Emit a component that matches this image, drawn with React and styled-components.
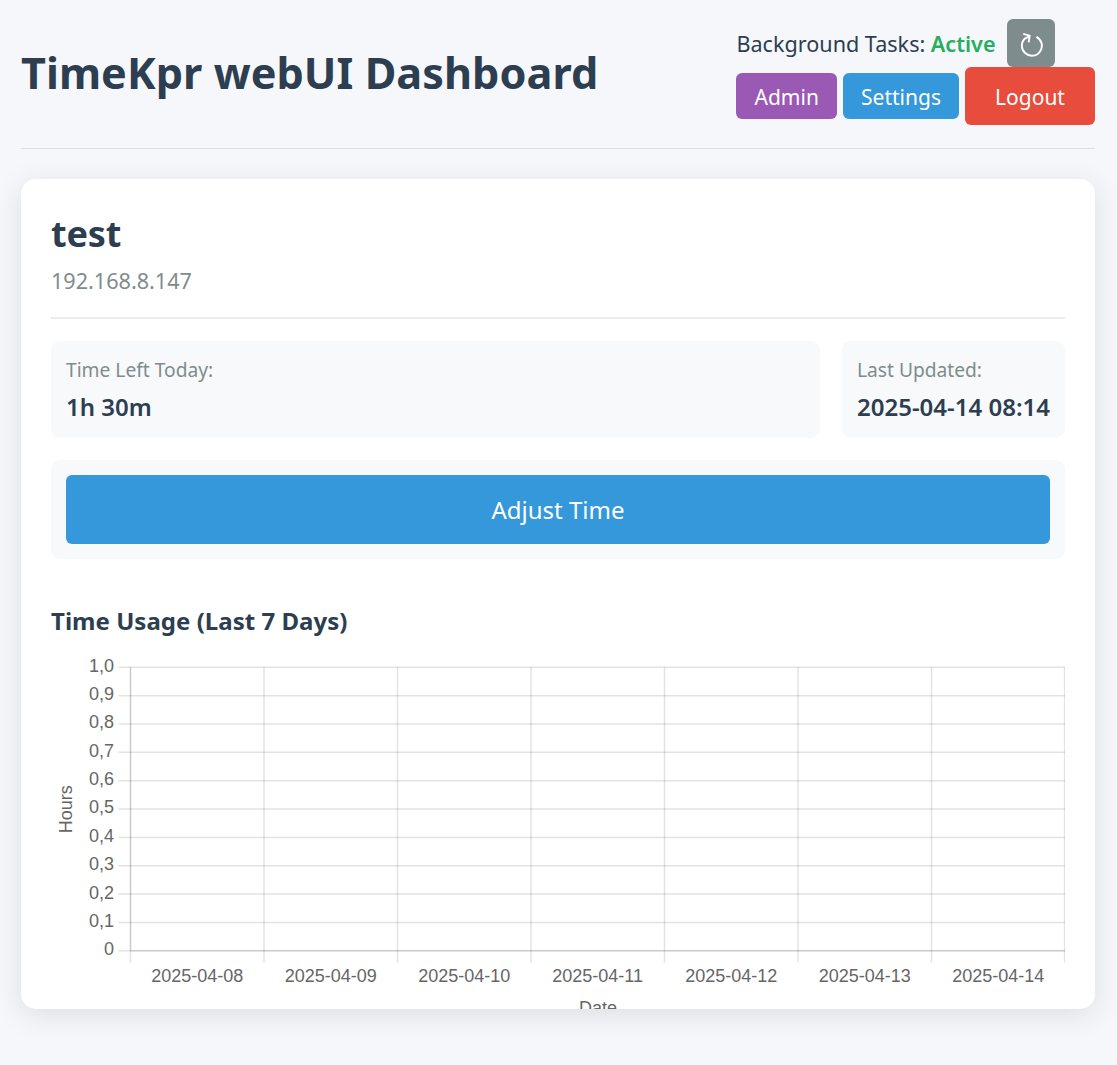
import React from "react";
import styled, { createGlobalStyle } from "styled-components";

const GlobalStyle = createGlobalStyle`
  * { box-sizing: border-box; }
  html, body { margin: 0; padding: 0; }
  body {
    background: #f5f7fb;
    color: #2c3e50;
    font-family: "Noto Sans", "Open Sans", sans-serif;
    min-height: 1065px;
    overflow: hidden;
  }
`;

const Page = styled.main`
  width: 1117px;
  padding: 0 22px 0 21px;
`;

const Header = styled.header`
  display: flex;
  justify-content: space-between;
  height: 149px;
  border-bottom: 1px solid #dcdfe4;
`;

const Title = styled.h1`
  margin: 43px 0 0;
  font-size: 43.2px;
  font-weight: 700;
  line-height: 60px;
  letter-spacing: 0.05px;
  white-space: nowrap;
`;

const Controls = styled.div`
  width: 358.6px;
  padding-top: 19px;
`;

const StatusRow = styled.div`
  display: flex;
  align-items: center;
  height: 48px;
  font-size: 21.6px;
  white-space: nowrap;
`;

const Active = styled.span`
  margin-left: 5.6px;
  color: #27ae60;
  font-weight: 600;
`;

const RefreshButton = styled.button`
  display: grid;
  place-items: center;
  width: 48px;
  height: 48px;
  margin-left: 11.6px;
  padding: 0;
  border: 0;
  border-radius: 6px;
  background: #7f8c8d;
`;

const ButtonRow = styled.nav`
  display: flex;
  align-items: center;
  justify-content: space-between;
  height: 58px;
`;

const NavButton = styled.button`
  width: ${(p) => p.$width}px;
  height: ${(p) => p.$height}px;
  padding: 1px 0 0;
  border: 0;
  border-radius: 6px;
  background: ${(p) => p.$color};
  color: #fff;
  font-family: inherit;
  font-size: 21px;
`;

const Card = styled.section`
  height: 830px;
  margin-top: 30px;
  padding: 30px 30px 0;
  overflow: hidden;
  border-radius: 15px;
  background: #fff;
  box-shadow: 0 6px 30px rgba(0, 0, 0, 0.1);
`;

const UserHeader = styled.div`
  height: 110px;
  border-bottom: 2px solid #ececee;
`;

const UserName = styled.h2`
  margin: 0;
  font-size: 36px;
  font-weight: 700;
  line-height: 50px;
  letter-spacing: -0.15px;
`;

const Address = styled.div`
  margin-top: 7px;
  color: #7f8c8d;
  font-size: 21.6px;
  line-height: 30px;
`;

const Stats = styled.div`
  display: grid;
  grid-template-columns: 1fr 223px;
  gap: 22px;
  margin-top: 22px;
`;

const Panel = styled.div`
  height: ${(p) => p.$height}px;
  padding: 15px;
  border-radius: 9px;
  background: #f8f9fb;
  white-space: nowrap;
`;

const Label = styled.div`
  color: #7f8c8d;
  font-size: 19.2px;
  line-height: 28px;
`;

const Value = styled.div`
  margin-top: 6px;
  font-size: 24px;
  font-weight: 600;
  line-height: 34px;
`;

const Actions = styled.div`
  margin-top: 22px;
`;

const AdjustButton = styled.button`
  display: block;
  width: 100%;
  height: 69px;
  padding: 0;
  border: 0;
  border-radius: 6px;
  background: #3498db;
  color: #fff;
  font-family: inherit;
  font-size: 24px;
`;

const ChartTitle = styled.h3`
  margin: 45px 0 0;
  font-size: 24px;
  font-weight: 700;
  line-height: 34px;
  letter-spacing: 0.03px;
`;

const Chart = styled.svg`
  display: block;
  width: 1014px;
  height: 380px;
  margin-top: 15px;
  fill: #666;
  font-family: "Liberation Sans", Arial, sans-serif;
  font-size: 18px;
`;

const RefreshIcon = () => (
  <svg width="28" height="28" viewBox="0 0 28 28" fill="none" stroke="#fff" strokeWidth="1.9">
    <path d="M8.5 9A10 10 0 1 0 19.4 7.8" />
    <path d="M6.2 4.9L12.6 6.7L11.7 13.4M12.6 6.7L8 9.8" />
  </svg>
);

const hours = ["1,0", "0,9", "0,8", "0,7", "0,6", "0,5", "0,4", "0,3", "0,2", "0,1", "0"];
const days = ["08", "09", "10", "11", "12", "13", "14"];
const left = 79.5;
const top = 14.3;
const rowY = (i) => i * 28.35 + top;
const colX = (i) => Math.min(1013.6, i * 133.5 + left);

const UsageChart = () => (
  <Chart viewBox="0 0 1014 380">
    {hours.map((h, i) => (
      <g key={h}>
        <path d={`M67.5 ${rowY(i)}H1014`} stroke="rgba(0,0,0,.11)" strokeWidth="1.5" />
        <text x="63" y={rowY(i) + 4.4} textAnchor="end">{h}</text>
      </g>
    ))}
    {Array.from({ length: 8 }, (_, i) => (
      <path key={i} d={`M${colX(i)} ${top}V309.5`} stroke="rgba(0,0,0,.11)" strokeWidth="1.5" />
    ))}
    <path d={`M${left} ${top}V${rowY(10)}H1014`} fill="none" stroke="rgba(0,0,0,.1)" strokeWidth="1.5" />
    {days.map((d, i) => (
      <text key={d} x={146.2 + i * 133.5} y="329" textAnchor="middle">{`2025-04-${d}`}</text>
    ))}
    <text transform="translate(21 156.3) rotate(-90)" textAnchor="middle">Hours</text>
    <text x="547" y="361" textAnchor="middle">Date</text>
  </Chart>
);

export default function App() {
  return (
    <>
      <GlobalStyle />
      <Page>
        <Header>
          <Title>TimeKpr webUI Dashboard</Title>
          <Controls>
            <StatusRow>
              Background Tasks: <Active>Active</Active>
              <RefreshButton aria-label="Refresh"><RefreshIcon /></RefreshButton>
            </StatusRow>
            <ButtonRow>
              <NavButton $width={100.6} $height={46} $color="#9b59b6">Admin</NavButton>
              <NavButton $width={116} $height={46} $color="#3498db">Settings</NavButton>
              <NavButton $width={130} $height={58} $color="#e74c3c">Logout</NavButton>
            </ButtonRow>
          </Controls>
        </Header>
        <Card>
          <UserHeader>
            <UserName>test</UserName>
            <Address>192.168.8.147</Address>
          </UserHeader>
          <Stats>
            <Panel $height={97}>
              <Label>Time Left Today:</Label>
              <Value>1h 30m</Value>
            </Panel>
            <Panel $height={97}>
              <Label>Last Updated:</Label>
              <Value>2025-04-14 08:14</Value>
            </Panel>
          </Stats>
          <Actions>
            <Panel $height={99}>
              <AdjustButton>Adjust Time</AdjustButton>
            </Panel>
          </Actions>
          <ChartTitle>Time Usage (Last 7 Days)</ChartTitle>
          <UsageChart />
        </Card>
      </Page>
    </>
  );
}
